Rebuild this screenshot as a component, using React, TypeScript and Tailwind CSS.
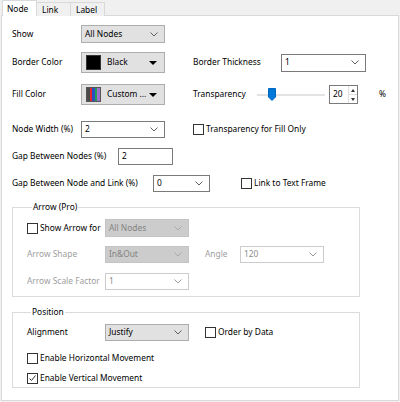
import React from "react";

type Variant = "gray" | "white" | "disabled" | "light";

const variantClass: Record<Variant, string> = {
  gray: "bg-[#e1e1e1] border-[#adadad] text-black",
  white: "bg-white border-[#7a7a7a] text-black",
  disabled: "bg-[#cccccc] border-[#c4c4c4] text-[#838383]",
  light: "bg-white border-[#cccccc] text-[#8c8c8c]",
};

function Chevron({ color = "#606060" }: { color?: string }) {
  return (
    <svg width="8" height="5" viewBox="0 0 8 5" className="shrink-0">
      <polyline points="0.5,0.5 4,4 7.5,0.5" fill="none" stroke={color} strokeWidth="1" />
    </svg>
  );
}

function Select({
  value,
  w,
  h = 17,
  variant = "white",
}: {
  value: string;
  w: number;
  h?: number;
  variant?: Variant;
}) {
  const chev =
    variant === "disabled" ? "#a8a8a8" : variant === "light" ? "#9a9a9a" : "#606060";
  return (
    <div
      className={`flex items-center justify-between border pl-[3px] pr-[6px] shrink-0 ${variantClass[variant]}`}
      style={{ width: w, height: h }}
    >
      <span className="leading-none">{value}</span>
      <Chevron color={chev} />
    </div>
  );
}

function Triangle() {
  return <div className="w-0 h-0 border-l-[4px] border-r-[4px] border-t-[4px] border-l-transparent border-r-transparent border-t-black" />;
}

function ColorButton({ label, swatch }: { label: string; swatch: React.ReactNode }) {
  return (
    <div className="flex items-center w-[84px] h-[21px] bg-[#e1e1e1] border border-[#adadad] pl-[4px] pr-[7px] shrink-0">
      {swatch}
      <span className="ml-[6px] flex-1 leading-none">{label}</span>
      <Triangle />
    </div>
  );
}

function Checkbox({
  label,
  checked = false,
}: {
  label: string;
  checked?: boolean;
}) {
  return (
    <div className="flex items-center">
      <div className="w-[11px] h-[11px] border border-[#333333] bg-white flex items-center justify-center shrink-0">
        {checked && (
          <svg width="9" height="9" viewBox="0 0 9 9">
            <polyline points="1.5,4.5 3.5,6.5 7.5,1.5" fill="none" stroke="#333" strokeWidth="1" />
          </svg>
        )}
      </div>
      <span className="ml-[2px] leading-none">{label}</span>
    </div>
  );
}

function Slider() {
  return (
    <div className="flex items-center w-[68px] h-[14px]">
      <div className="w-[11px] h-[2px] bg-[#e3e3e3]" />
      <svg width="8" height="13" viewBox="0 0 8 13" className="shrink-0">
        <path d="M0.5 0.5 H7.5 V9 L4 12.5 L0.5 9 Z" fill="#0078d7" stroke="#0068c0" strokeWidth="1" />
      </svg>
      <div className="flex-1 h-[2px] bg-[#e3e3e3]" />
    </div>
  );
}

function SpinBox({ value }: { value: string }) {
  return (
    <div className="flex w-[29px] h-[19px] border border-[#7a7a7a] bg-white shrink-0">
      <span className="flex-1 pl-[3px] flex items-center leading-none">{value}</span>
      <div className="w-[9px] flex flex-col border-l border-[#e0e0e0]">
        <div className="flex-1 flex items-center justify-center border-b border-[#e0e0e0]">
          <div className="w-0 h-0 border-l-[2px] border-r-[2px] border-b-[3px] border-l-transparent border-r-transparent border-b-[#333]" />
        </div>
        <div className="flex-1 flex items-center justify-center">
          <div className="w-0 h-0 border-l-[2px] border-r-[2px] border-t-[3px] border-l-transparent border-r-transparent border-t-[#333]" />
        </div>
      </div>
    </div>
  );
}

const fillSwatch = (
  <div className="flex w-[15px] h-[15px] border border-[#555] shrink-0">
    <div className="flex-1 bg-[#4a4a4a]" />
    <div className="flex-1 bg-[#e3262d]" />
    <div className="flex-1 bg-[#2b4fc2]" />
    <div className="flex-1 bg-[#25a050]" />
    <div className="flex-1 bg-[#a070d0]" />
  </div>
);

const blackSwatch = <div className="w-[15px] h-[15px] bg-black border border-[#333] shrink-0" />;

export default function App() {
  return (
    <div className="w-[400px] h-[402px] bg-[#f0f0f0] overflow-hidden whitespace-nowrap text-[8.4px] text-black font-['Noto_Sans','Open_Sans',sans-serif]">
      {/* Tabs */}
      <div className="flex items-end h-[16px] pl-[2px]">
        <div className="w-[35px] h-[16px] bg-white border border-b-0 border-[#d9d9d9] pl-[4px] pt-[2px] relative z-10">
          Node
        </div>
        <div className="w-[34px] h-[14px] bg-[#f0f0f0] border border-l-0 border-b-0 border-[#d9d9d9] pl-[5px] pt-[1px]">
          Link
        </div>
        <div className="w-[34px] h-[14px] bg-[#f0f0f0] border border-l-0 border-b-0 border-[#d9d9d9] pl-[5px] pt-[1px]">
          Label
        </div>
      </div>

      {/* Panel */}
      <div className="ml-[1px] -mt-px w-[398px] h-[386px] bg-white border border-[#d9d9d9] pl-[10px]">
        {/* Show */}
        <div className="flex items-center h-[18px] mt-[9px]">
          <span className="w-[69px]">Show</span>
          <Select value="All Nodes" w={84} h={18} variant="gray" />
        </div>

        {/* Border color */}
        <div className="flex items-center h-[21px] mt-[9px]">
          <span className="w-[69px]">Border Color</span>
          <ColorButton label="Black" swatch={blackSwatch} />
          <span className="w-[88px] ml-[28px]">Border Thickness</span>
          <Select value="1" w={85} h={18} />
        </div>

        {/* Fill color */}
        <div className="flex items-center h-[21px] mt-[11px]">
          <span className="w-[64px]">Fill Color</span>
          <div className="ml-[5px]">
            <ColorButton label="Custom ..." swatch={fillSwatch} />
          </div>
          <span className="w-[64px] ml-[28px]">Transparency</span>
          <Slider />
          <div className="ml-[4px]">
            <SpinBox value="20" />
          </div>
          <span className="ml-[21px]">%</span>
        </div>

        {/* Node width */}
        <div className="flex items-center h-[17px] mt-[16px]">
          <span className="w-[69px]">Node Width (%)</span>
          <Select value="2" w={84} />
          <div className="ml-[28px]">
            <Checkbox label="Transparency for Fill Only" />
          </div>
        </div>

        {/* Gap nodes */}
        <div className="flex items-center h-[17px] mt-[10px]">
          <span className="w-[106px]">Gap Between Nodes (%)</span>
          <div className="w-[55px] h-[17px] border border-[#7a7a7a] pl-[3px] flex items-center">2</div>
        </div>

        {/* Gap link */}
        <div className="flex items-center h-[17px] mt-[10px]">
          <span className="w-[141px]">Gap Between Node and Link (%)</span>
          <Select value="0" w={57} />
          <div className="ml-[31px]">
            <Checkbox label="Link to Text Frame" />
          </div>
        </div>

        {/* Arrow group */}
        <fieldset className="w-[348px] h-[96px] mt-[9px] border border-[#dcdcdc] pl-[14px]">
          <legend className="ml-[5px] px-[1px] leading-[12px]">Arrow (Pro)</legend>
          <div className="flex items-center h-[18px] mt-[6px]">
            <div className="w-[78px]">
              <Checkbox label="Show Arrow for" />
            </div>
            <Select value="All Nodes" w={84} h={18} variant="disabled" />
          </div>
          <div className="flex items-center h-[17px] mt-[9px] text-[#a0a0a0]">
            <span className="w-[78px]">Arrow Shape</span>
            <Select value="In&Out" w={84} variant="disabled" />
            <span className="w-[35px] ml-[16px]">Angle</span>
            <Select value="120" w={84} variant="light" />
          </div>
          <div className="flex items-center h-[17px] mt-[10px] text-[#a0a0a0]">
            <span className="w-[78px]">Arrow Scale Factor</span>
            <Select value="1" w={84} variant="light" />
          </div>
        </fieldset>

        {/* Position group */}
        <fieldset className="w-[348px] h-[82px] mt-[9px] border border-[#dcdcdc] pl-[14px]">
          <legend className="ml-[4px] px-[1px] leading-[12px]">Position</legend>
          <div className="flex items-center h-[17px] mt-[6px]">
            <span className="w-[78px]">Alignment</span>
            <Select value="Justify" w={84} variant="gray" />
            <div className="ml-[16px]">
              <Checkbox label="Order by Data" />
            </div>
          </div>
          <div className="flex items-center h-[11px] mt-[12px]">
            <Checkbox label="Enable Horizontal Movement" />
          </div>
          <div className="flex items-center h-[11px] mt-[9px]">
            <Checkbox label="Enable Vertical Movement" checked />
          </div>
        </fieldset>
      </div>
    </div>
  );
}
